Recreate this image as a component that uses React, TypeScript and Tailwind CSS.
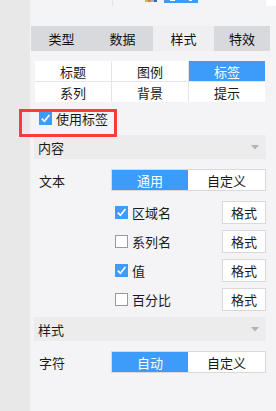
import React from "react";

const font = { fontFamily: '"Noto Sans CJK SC", "Noto Sans", sans-serif' };

function Check({ checked }: { checked: boolean }) {
  if (checked) {
    return (
      <div className="w-[13px] h-[13px] bg-[#3d9bf9] flex items-center justify-center shrink-0">
        <svg width="11" height="11" viewBox="0 0 11 11">
          <path d="M1.8 5.6 L4.4 8.3 L9.4 2" stroke="#fff" strokeWidth="1.7" fill="none" />
        </svg>
      </div>
    );
  }
  return <div className="w-[13px] h-[13px] bg-white border-[1.5px] border-[#9a9a9a] shrink-0" />;
}

function Section({ title }: { title: string }) {
  return (
    <div className="ml-[4px] w-[232px] h-[24px] bg-[#ececec] flex items-center justify-between pl-[4px] pr-[7px]">
      <span className="text-[13px] leading-none text-[#1a1a1a]">{title}</span>
      <svg width="8" height="5" viewBox="0 0 8 5">
        <path d="M0 0 H8 L4 4.5 Z" fill="#b3b3b3" />
      </svg>
    </div>
  );
}

function Segmented({ left, right }: { left: string; right: string }) {
  return (
    <div className="w-[155px] h-[22px] border border-[#d9d9dc] flex bg-white">
      <div className="w-[76px] h-full bg-[#3d9bf9] text-white flex items-center justify-center text-[13px] leading-none">
        {left}
      </div>
      <div className="flex-1 h-full flex items-center justify-center text-[13px] leading-none text-[#1a1a1a]">
        {right}
      </div>
    </div>
  );
}

function OptRow({ label, checked }: { label: string; checked: boolean }) {
  return (
    <div className="h-[23px] flex items-center">
      <div className="ml-[85px] flex items-center gap-[4px]">
        <Check checked={checked} />
        <span className="text-[13px] leading-none text-[#1a1a1a]">{label}</span>
      </div>
      <div className="ml-auto mr-[10px] w-[44px] h-[23px] bg-white border border-[#d9d9dc] flex items-center justify-center text-[13px] leading-none text-[#1a1a1a]">
        格式
      </div>
    </div>
  );
}

export default function App() {
  const tabs = [
    { t: "类型", w: "w-[61px]", active: false },
    { t: "数据", w: "w-[61px]", active: false },
    { t: "样式", w: "w-[61px]", active: true },
    { t: "特效", w: "w-[56px]", active: false },
  ];
  const sub = ["标题", "图例", "标签", "系列", "背景", "提示"];
  return (
    <div className="relative w-[276px] h-[411px] flex overflow-hidden" style={font}>
      <div className="w-[30px] h-full bg-[#e8e8e8]" />
      <div className="flex-1 h-full bg-[#f4f4f6] flex flex-col">
        {/* top cut-off strip */}
        <div className="h-[26px] flex items-start">
          <div className="w-[82px]" />
          <div className="w-px h-[6px] bg-[#e4e4e6]" />
          <div className="ml-[32px] flex h-[2px]">
            <div className="w-[3px] h-full bg-[#b8c24a]" />
            <div className="w-[3px] h-full bg-[#d97a6a]" />
            <div className="w-[3px] h-full bg-[#b0b0b0]" />
            <div className="w-[3px] h-full bg-[#2e6db4]" />
          </div>
          <div className="ml-[7px] w-[34px] h-[3px] bg-[#3d9bf9] flex items-start">
            <div className="ml-[6px] w-[5px] h-[1px] bg-white" />
            <div className="ml-[14px] w-[3px] h-[1px] bg-white" />
          </div>
          <div className="ml-auto w-[10px] h-[6px] bg-white" />
        </div>
        {/* tabs */}
        <div className="ml-px flex h-[25px]">
          {tabs.map((x) => (
            <div
              key={x.t}
              className={`${x.w} h-full flex items-center justify-center text-[13px] leading-none text-[#111] ${
                x.active ? "bg-[#efeff1]" : "bg-[#d8d9dc]"
              }`}
            >
              {x.t}
            </div>
          ))}
        </div>
        {/* sub tabs */}
        <div className="mt-[10px] ml-[5px] w-[230px] grid grid-cols-3 gap-px bg-[#e6e6e8]">
          {sub.map((s) => (
            <div
              key={s}
              className={`h-[20px] flex items-center justify-center text-[13px] leading-none ${
                s === "标签" ? "bg-[#3d9bf9] text-white" : "bg-white text-[#1a1a1a]"
              }`}
            >
              {s}
            </div>
          ))}
        </div>
        {/* use label */}
        <div className="mt-[10px] ml-[9px] h-[13px] flex items-center gap-[4px]">
          <Check checked={true} />
          <span className="text-[13px] leading-none text-[#1a1a1a]">使用标签</span>
        </div>
        <div className="mt-[10px]">
          <Section title="内容" />
        </div>
        <div className="mt-[10px] h-[22px] flex items-center">
          <span className="ml-[9px] text-[13px] leading-none text-[#1a1a1a]">文本</span>
          <div className="ml-auto mr-[10px]">
            <Segmented left="通用" right="自定义" />
          </div>
        </div>
        <div className="mt-[10px] flex flex-col gap-[6px]">
          <OptRow label="区域名" checked={true} />
          <OptRow label="系列名" checked={false} />
          <OptRow label="值" checked={true} />
          <OptRow label="百分比" checked={false} />
        </div>
        <div className="mt-[6px]">
          <Section title="样式" />
        </div>
        <div className="mt-[10px] h-[22px] flex items-center">
          <span className="ml-[9px] text-[13px] leading-none text-[#1a1a1a]">字符</span>
          <div className="ml-auto mr-[10px]">
            <Segmented left="自动" right="自定义" />
          </div>
        </div>
      </div>
      <div className="absolute left-[19px] top-[109px] w-[98px] h-[28px] border-[3px] border-[#ff3b3b]" />
    </div>
  );
}
